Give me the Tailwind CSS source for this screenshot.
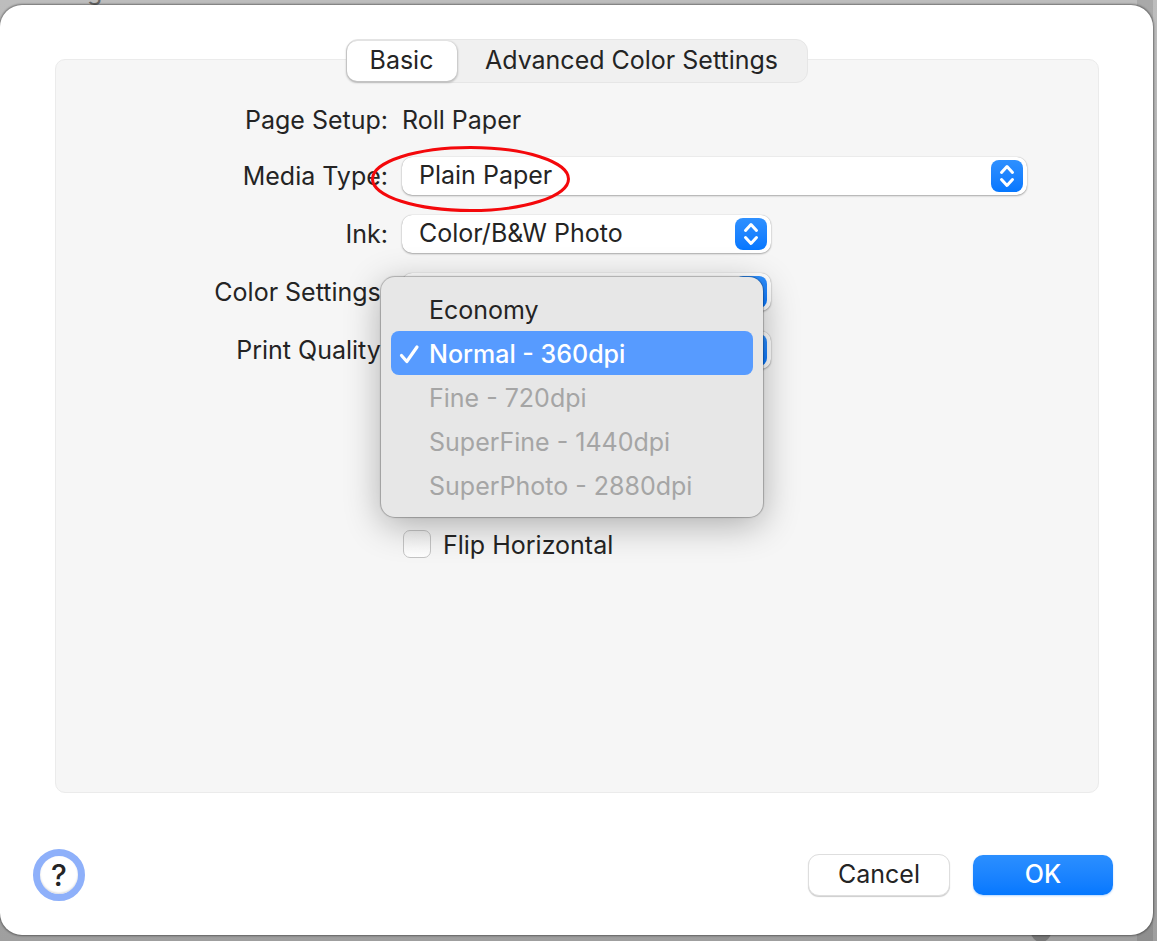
<!DOCTYPE html>
<html lang="en">
<head>
    <meta charset="UTF-8">
    <meta name="viewport" content="width=device-width, initial-scale=1.0">
    <title>Print Settings</title>
    <script src="https://cdn.jsdelivr.net/npm/@tailwindcss/browser@4"></script>
</head>
<body class="relative min-h-screen flex flex-col overflow-hidden bg-linear-to-b from-[#bdbdbd] to-[#9f9f9f] pt-[5px] pr-1 pb-[6px] font-['Inter',sans-serif] text-[25px] leading-8 text-[#242424]">
    <!-- window behind the dialog -->
    <div class="absolute inset-y-0 right-1 w-4 bg-black/10" aria-hidden="true"></div>
    <div class="absolute left-[87px] -top-[25px] text-[#666]" aria-hidden="true">g</div>
    <div class="absolute right-[106px] -bottom-[1px] size-5 rounded-full bg-[#777]" aria-hidden="true"></div>

    <main class="relative flex-1 flex flex-col bg-white rounded-[22px] pt-[34px] pb-[34px] shadow-[0_0_2px_1px_rgba(0,0,0,0.4)]">
        <div role="tablist" class="relative z-10 self-center flex h-11 -mb-6 rounded-xl bg-[#f0f0f0] border border-[#e6e6e6]">
            <button role="tab" aria-selected="true" class="w-[110px] h-10 mt-px pb-[2px] rounded-[10px] bg-white shadow-[0_1px_2px_1px_rgba(0,0,0,0.2)]">Basic</button>
            <button role="tab" aria-selected="false" class="w-[350px] h-10 mt-px pb-[2px]">Advanced Color Settings</button>
        </div>

        <section class="flex-1 ml-[55px] mr-[54px] pt-[41px] pr-[71px] rounded-[10px] bg-[#f6f6f6] border border-[#ebebeb]">
            <form class="grid grid-cols-[332px_1fr] gap-x-[14px] gap-y-5 items-center">
                <div class="text-right h-9 leading-[38px]">Page Setup:</div>
                <div class="h-9 leading-[38px]">Roll Paper</div>

                <label for="media" class="text-right">Media Type:</label>
                <div class="relative">
                    <select id="media" class="block appearance-none w-full h-[38px] pl-[17px] pb-[3px] rounded-[10px] bg-white shadow-[0_1px_2px_rgba(0,0,0,0.3),0_0_1px_rgba(0,0,0,0.3)]">
                        <option>Plain Paper</option>
                    </select>
                    <span class="absolute right-1 top-[3px] size-8 rounded-lg bg-linear-to-b from-[#2e90ff] to-[#0577ff] pointer-events-none">
                        <svg viewBox="0 0 32 32" class="size-8" fill="none" stroke="#fff" stroke-width="3" stroke-linecap="round" stroke-linejoin="round"><path d="M10.500 12.500L16 6.500L21.500 12.500M10.500 19.500L16 25.500L21.500 19.500"/></svg>
                    </span>
                    <!-- callout ring -->
                    <svg class="absolute -left-[31px] -top-[11px] w-[199px] h-[66px] pointer-events-none" viewBox="0 0 199 66" fill="none"><ellipse cx="99.500" cy="33" rx="98" ry="31.500" stroke="#f4080b" stroke-width="3"/></svg>
                </div>

                <label for="ink" class="text-right">Ink:</label>
                <div class="relative w-[369px]">
                    <select id="ink" class="block appearance-none w-full h-[38px] pl-[17px] pb-[3px] rounded-[10px] bg-white shadow-[0_1px_2px_rgba(0,0,0,0.3),0_0_1px_rgba(0,0,0,0.3)]">
                        <option>Color/B&amp;W Photo</option>
                    </select>
                    <span class="absolute right-1 top-[3px] size-8 rounded-lg bg-linear-to-b from-[#2e90ff] to-[#0577ff] pointer-events-none">
                        <svg viewBox="0 0 32 32" class="size-8" fill="none" stroke="#fff" stroke-width="3" stroke-linecap="round" stroke-linejoin="round"><path d="M10.500 12.500L16 6.500L21.500 12.500M10.500 19.500L16 25.500L21.500 19.500"/></svg>
                    </span>
                </div>

                <label for="color" class="text-right">Color Settings:</label>
                <div class="relative w-[369px]">
                    <select id="color" class="block appearance-none w-full h-[38px] rounded-[10px] bg-white shadow-[0_1px_2px_rgba(0,0,0,0.3),0_0_1px_rgba(0,0,0,0.3)]"></select>
                    <span class="absolute right-1 top-[3px] size-8 rounded-lg bg-linear-to-b from-[#2e90ff] to-[#0577ff] pointer-events-none"></span>
                </div>

                <label for="quality" class="text-right">Print Quality:</label>
                <div class="relative w-[369px]">
                    <select id="quality" class="block appearance-none w-full h-[38px] rounded-[10px] bg-white shadow-[0_1px_2px_rgba(0,0,0,0.3),0_0_1px_rgba(0,0,0,0.3)]"></select>
                    <span class="absolute right-1 top-[3px] size-8 rounded-lg bg-linear-to-b from-[#2e90ff] to-[#0577ff] pointer-events-none"></span>

                    <!-- open quality menu -->
                    <div role="menu" class="absolute z-20 -left-[21px] -top-[54px] w-[382px] p-[10px] rounded-[14px] bg-[#e7e7e7] shadow-[0_0_1px_1px_rgba(0,0,0,0.25),0_8px_36px_rgba(0,0,0,0.3)]">
                        <button type="button" role="menuitem" class="block w-full h-11 pt-[2px] pl-[38px] text-left">Economy</button>
                        <button type="button" role="menuitem" class="relative block w-full h-11 pt-[2px] pl-[38px] text-left rounded-lg bg-[#579bff] text-white font-medium">
                            <svg class="absolute left-2 top-3 size-[22px]" viewBox="0 0 22 22" fill="none" stroke="#fff" stroke-width="3.200" stroke-linecap="round" stroke-linejoin="round"><path d="M2.500 12.500L7.800 18.500L18 4"/></svg>
                            Normal - 360dpi
                        </button>
                        <button type="button" role="menuitem" disabled class="block w-full h-11 pt-[2px] pl-[38px] text-left text-[#a5a5a5]">Fine - 720dpi</button>
                        <button type="button" role="menuitem" disabled class="block w-full h-11 pt-[2px] pl-[38px] text-left text-[#a5a5a5]">SuperFine - 1440dpi</button>
                        <button type="button" role="menuitem" disabled class="block w-full h-11 pt-[2px] pl-[38px] text-left text-[#a5a5a5]">SuperPhoto - 2880dpi</button>
                    </div>
                </div>

                <div class="col-start-2 mt-[138px] flex items-center gap-3 pl-px">
                    <input id="flip" type="checkbox" class="appearance-none size-7 rounded-[7px] border border-[#c4c4c4] bg-linear-to-b from-[#f0f0f0] to-white">
                    <label for="flip" class="pt-[2px]">Flip Horizontal</label>
                </div>
            </form>
        </section>

        <footer class="mt-14 pl-[33px] pr-10 flex items-center">
            <button aria-label="Help" class="size-[52px] rounded-full border-[7px] border-[#8eb0fa] bg-white shadow-[inset_0_-1px_2px_rgba(0,0,0,0.15)] text-[30px] font-medium">?</button>
            <button class="ml-auto w-[142px] h-[42px] pb-[2px] rounded-[11px] bg-white border border-[#dedede] shadow-[0_1px_1px_rgba(0,0,0,0.2)]">Cancel</button>
            <button class="ml-[23px] w-[140px] h-10 pb-[2px] rounded-[10px] bg-linear-to-b from-[#2b8fff] to-[#0578ff] text-white font-medium shadow-[0_1px_2px_rgba(0,120,255,0.3)]">OK</button>
        </footer>
    </main>
</body>
</html>
